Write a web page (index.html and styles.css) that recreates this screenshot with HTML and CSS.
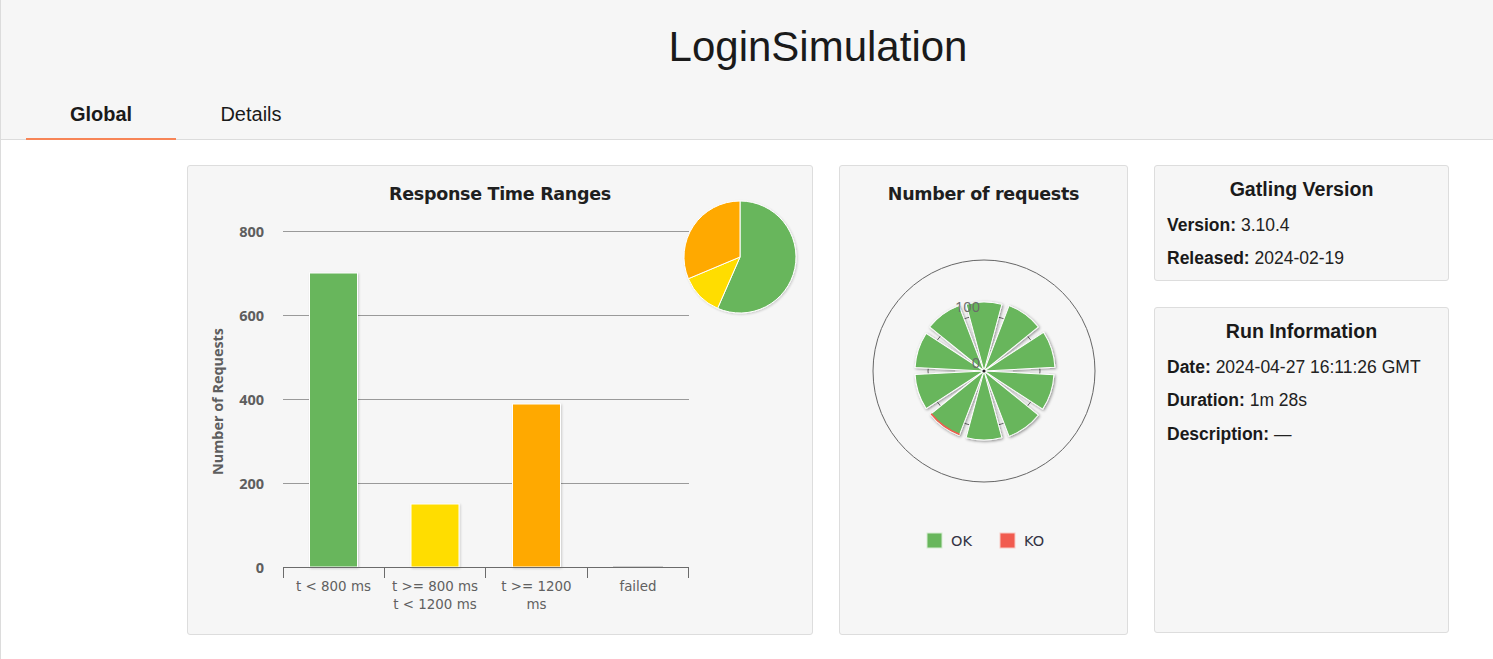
FILE: index.html
```html
<!DOCTYPE html>
<html lang="en">
<head>
<meta charset="utf-8">
<title>LoginSimulation</title>
<link rel="stylesheet" href="styles.css">
</head>
<body>
<div class="page">
  <header class="header">
    <div class="title-wrap"><h1 class="title">LoginSimulation</h1></div>
    <nav class="tabs">
      <a class="tab active">Global</a>
      <a class="tab">Details</a>
    </nav>
  </header>
  <main class="content">
    <section class="card range-card">
      <svg class="chart" width="624" height="468" viewBox="0 0 624 468">
        <defs>
          <filter id="barShadow" x="-20%" y="-20%" width="140%" height="140%">
            <feDropShadow dx="1" dy="1" stdDeviation="1" flood-color="#000" flood-opacity="0.18"/>
          </filter>
        </defs>
        <text class="chart-title" x="312" y="34" text-anchor="middle">Response Time Ranges</text>
        <path class="grid" d="M95 65.5H501M95 149.5H501M95 233.5H501M95 317.5H501"/>
        <text class="ylab" x="76" y="70.5">800</text>
        <text class="ylab" x="76" y="154.5">600</text>
        <text class="ylab" x="76" y="238.5">400</text>
        <text class="ylab" x="76" y="322.5">200</text>
        <text class="ylab" x="76" y="406.5">0</text>
        <text class="ytitle" transform="translate(35 235.5) rotate(-90)" text-anchor="middle">Number of Requests</text>
        <g filter="url(#barShadow)">
          <rect class="bar bar-ok" x="121.5" y="107" width="48" height="294"/>
          <rect class="bar bar-mid" x="223" y="338" width="48" height="63"/>
          <rect class="bar bar-high" x="324.5" y="238" width="48" height="163"/>
        </g>
        <path class="failed" d="M425 400.5H475"/>
        <path class="axis" d="M95 401.5H501M95.5 401V412M196.5 401V412M297.5 401V412M399.5 401V412M500.5 401V412"/>
        <text class="xlab" x="145.5" y="424.5" text-anchor="middle">t &lt; 800 ms</text>
        <text class="xlab" x="247" y="424.5" text-anchor="middle">t &gt;= 800 ms</text>
        <text class="xlab" x="247" y="442.5" text-anchor="middle">t &lt; 1200 ms</text>
        <text class="xlab" x="348.5" y="424.5" text-anchor="middle">t &gt;= 1200</text>
        <text class="xlab" x="348.5" y="442.5" text-anchor="middle">ms</text>
        <text class="xlab" x="450" y="424.5" text-anchor="middle">failed</text>
        <g filter="url(#barShadow)">
          <path class="slice slice-ok" d="M552 91L552 35A56 56 0 1 1 529.58 142.32Z"/>
          <path class="slice slice-mid" d="M552 91L529.58 142.32A56 56 0 0 1 500.37 112.7Z"/>
          <path class="slice slice-high" d="M552 91L500.37 112.7A56 56 0 0 1 552 35Z"/>
        </g>
      </svg>
    </section>

    <section class="card requests-card">
      <svg class="chart" width="287" height="468" viewBox="0 0 287 468">
        <defs>
          <filter id="wedgeShadow" x="-30%" y="-30%" width="160%" height="160%">
            <feDropShadow dx="1" dy="1" stdDeviation="1.8" flood-color="#000" flood-opacity="0.45"/>
          </filter>
        </defs>
        <text class="chart-title" x="143.5" y="34" text-anchor="middle">Number of requests</text>
        <circle class="pane" cx="144" cy="205" r="111"/>
        <circle class="polar-grid" cx="144" cy="205" r="56"/>
        <g transform="translate(144 205)">
          <g filter="url(#wedgeShadow)">
            <path class="wedge" d="M0 0L-17.86 -66.65A69 69 0 0 1 17.86 -66.65Z"/>
            <path class="wedge" transform="rotate(36)" d="M0 0L-18.12 -67.61A70 70 0 0 1 18.12 -67.61Z"/>
            <path class="wedge" transform="rotate(72)" d="M0 0L-18.38 -68.58A71 71 0 0 1 18.38 -68.58Z"/>
            <path class="wedge" transform="rotate(108)" d="M0 0L-18.12 -67.61A70 70 0 0 1 18.12 -67.61Z"/>
            <path class="wedge" transform="rotate(144)" d="M0 0L-18.12 -67.61A70 70 0 0 1 18.12 -67.61Z"/>
            <path class="wedge" transform="rotate(180)" d="M0 0L-17.86 -66.65A69 69 0 0 1 17.86 -66.65Z"/>
            <path class="wedge" transform="rotate(216)" d="M0 0L-17.86 -66.65A69 69 0 0 1 17.86 -66.65Z"/>
            <path class="wedge" transform="rotate(252)" d="M0 0L-17.86 -66.65A69 69 0 0 1 17.86 -66.65Z"/>
            <path class="wedge" transform="rotate(288)" d="M0 0L-17.86 -66.65A69 69 0 0 1 17.86 -66.65Z"/>
            <path class="wedge" transform="rotate(324)" d="M0 0L-18.12 -67.61A70 70 0 0 1 18.12 -67.61Z"/>
          </g>
          <path class="ko-arc" transform="rotate(216)" d="M-17.6 -65.7A68 68 0 0 1 17.6 -65.7"/>
          <circle class="center-dot" cx="0" cy="0" r="1.6"/>
        </g>
        <text class="plab" x="127.5" y="146" text-anchor="middle">100</text>
        <text class="plab" x="136" y="202" text-anchor="middle">0</text>
        <rect class="legend-ok" x="87" y="367" width="15" height="15"/>
        <text class="legend-text" x="111" y="380">OK</text>
        <rect class="legend-ko" x="160" y="367" width="15" height="15"/>
        <text class="legend-text" x="184" y="380">KO</text>
      </svg>
    </section>

    <div class="info-col">
      <section class="card info-card version-card">
        <h2 class="info-title">Gatling Version</h2>
        <p class="info-row"><b>Version:</b> 3.10.4</p>
        <p class="info-row"><b>Released:</b> 2024-02-19</p>
      </section>
      <section class="card info-card run-card">
        <h2 class="info-title">Run Information</h2>
        <p class="info-row"><b>Date:</b> 2024-04-27 16:11:26 GMT</p>
        <p class="info-row"><b>Duration:</b> 1m 28s</p>
        <p class="info-row"><b>Description:</b> —</p>
      </section>
    </div>
  </main>
</div>
</body>
</html>
```

FILE: styles.css
```css
html, body {
  margin: 0;
  padding: 0;
  background: #ffffff;
}

body {
  font-family: "Liberation Sans", Arial, sans-serif;
  color: #1a1a1a;
}

.page {
  border-left: 1px solid #dcdcdc;
  min-height: 659px;
  box-sizing: border-box;
}

.header {
  background: #f6f6f6;
  border-bottom: 1px solid #dcdcdc;
  height: 140px;
  box-sizing: border-box;
}

.title-wrap {
  margin-left: 186px;
  width: 1262px;
  padding-top: 23px;
}

.title {
  margin: 0;
  font-size: 42px;
  line-height: 48px;
  font-weight: 400;
  text-align: center;
  color: #1a1a1a;
}

.tabs {
  display: flex;
  margin-top: 20px;
  padding-left: 25px;
}

.tab {
  width: 150px;
  text-align: center;
  font-size: 20px;
  line-height: 23px;
  padding: 12px 0;
  border-bottom: 2px solid transparent;
  color: #1a1a1a;
}

.tab.active {
  font-weight: 700;
  border-bottom-color: #f78557;
}

.content {
  display: flex;
  gap: 26px;
  padding: 25px 0 0 186px;
}

.card {
  background: #f6f6f6;
  border: 1px solid #dddddd;
  border-radius: 3px;
  box-sizing: border-box;
}

.range-card {
  width: 626px;
  height: 470px;
  flex: none;
}

.requests-card {
  width: 289px;
  height: 470px;
  flex: none;
}

.chart {
  display: block;
}

.chart-title {
  font-family: "DejaVu Sans", sans-serif;
  font-weight: 700;
  font-size: 17.5px;
  letter-spacing: -0.3px;
  fill: #1f1f1f;
}

.grid {
  stroke: #9a9a9a;
  stroke-width: 1;
  fill: none;
}

.axis {
  stroke: #6b6b6b;
  stroke-width: 1;
  fill: none;
}

.failed {
  stroke: #cfcfcf;
  stroke-width: 1;
}

.ylab {
  font-family: "Open Sans", sans-serif;
  font-weight: 700;
  font-size: 14.5px;
  fill: #5e5e5e;
  text-anchor: end;
}

.ytitle {
  font-family: "Open Sans", sans-serif;
  font-weight: 700;
  font-size: 14.4px;
  fill: #5e5e5e;
}

.xlab {
  font-family: "DejaVu Sans", sans-serif;
  font-size: 13.4px;
  fill: #606060;
}

.bar {
  stroke: #ffffff;
  stroke-width: 1;
}

.bar-ok { fill: #68b65c; }
.bar-mid { fill: #ffdd00; }
.bar-high { fill: #ffa900; }

.slice {
  stroke: #ffffff;
  stroke-width: 1;
  stroke-linejoin: round;
}

.slice-ok { fill: #68b65c; }
.slice-mid { fill: #ffdd00; }
.slice-high { fill: #ffa900; }

.pane {
  fill: none;
  stroke: #666666;
  stroke-width: 1;
}

.polar-grid {
  fill: none;
  stroke: #666666;
  stroke-width: 1;
}

.wedge {
  fill: #68b65c;
  stroke: #ffffff;
  stroke-width: 1;
  stroke-linejoin: round;
}

.ko-arc {
  fill: none;
  stroke: #f15b4f;
  stroke-width: 1.6;
}

.center-dot {
  fill: #222222;
}

.plab {
  font-family: "Open Sans", sans-serif;
  font-size: 14.5px;
  fill: #6a6a6a;
}

.legend-ok {
  fill: #68b65c;
  stroke: #d6ecd2;
  stroke-width: 1;
}

.legend-ko {
  fill: #f15b4f;
  stroke: #f8c9c4;
  stroke-width: 1;
}

.legend-text {
  font-family: "DejaVu Sans", sans-serif;
  font-size: 14.5px;
  fill: #333344;
}

.info-col {
  display: flex;
  flex-direction: column;
  gap: 26px;
  width: 295px;
  flex: none;
}

.info-card {
  padding: 11px 12px 0;
}

.version-card {
  height: 116px;
}

.run-card {
  height: 326px;
}

.info-title {
  margin: 0 0 8px;
  font-size: 19.6px;
  line-height: 24px;
  font-weight: 700;
  text-align: center;
  color: #1a1a1a;
}

.info-row {
  margin: 0;
  font-size: 17.5px;
  line-height: 33.3px;
  color: #222222;
}

.info-row b {
  font-weight: 700;
  color: #1a1a1a;
}
```
